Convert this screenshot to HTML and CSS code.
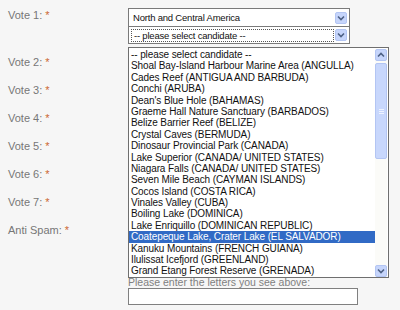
FILE: index.html
```html
<!DOCTYPE html>
<html lang="en">
<head>
  <meta charset="UTF-8">
  <title>Vote</title>
  <link rel="stylesheet" href="styles.css">
</head>
<body>

  <p class="intro">their. You must select 7 different nominees.</p>

  <form class="vote-form">
    <div class="row row-first">
      <label class="label">Vote 1: <span class="req">*</span></label>
      <div class="field">
        <div class="select">
          <span class="select-text">North and Central America</span>
          <span class="arrow"><svg width="8" height="6" viewBox="0 0 8 6"><polyline points="1,1.5 4,4.5 7,1.5" fill="none" stroke="#4d6185" stroke-width="1.6"/></svg></span>
        </div>
        <div class="select select-open">
          <span class="select-text focus">-- please select candidate --</span>
          <span class="arrow"><svg width="8" height="6" viewBox="0 0 8 6"><polyline points="1,1.5 4,4.5 7,1.5" fill="none" stroke="#4d6185" stroke-width="1.6"/></svg></span>
        </div>

        <div class="dropdown">
          <ul class="options">
            <li>-- please select candidate --</li>
            <li>Shoal Bay-Island Harbour Marine Area (ANGULLA)</li>
            <li>Cades Reef (ANTIGUA AND BARBUDA)</li>
            <li>Conchi (ARUBA)</li>
            <li>Dean's Blue Hole (BAHAMAS)</li>
            <li>Graeme Hall Nature Sanctuary (BARBADOS)</li>
            <li>Belize Barrier Reef (BELIZE)</li>
            <li>Crystal Caves (BERMUDA)</li>
            <li>Dinosaur Provincial Park (CANADA)</li>
            <li>Lake Superior (CANADA/ UNITED STATES)</li>
            <li>Niagara Falls (CANADA/ UNITED STATES)</li>
            <li>Seven Mile Beach (CAYMAN ISLANDS)</li>
            <li>Cocos Island (COSTA RICA)</li>
            <li>Vinales Valley (CUBA)</li>
            <li>Boiling Lake (DOMINICA)</li>
            <li>Lake Enriquillo (DOMINICAN REPUBLIC)</li>
            <li class="selected">Coatepeque Lake, Crater Lake (EL SALVADOR)</li>
            <li>Kanuku Mountains (FRENCH GUIANA)</li>
            <li>Ilulissat Icefjord (GREENLAND)</li>
            <li>Grand Etang Forest Reserve (GRENADA)</li>
          </ul>
          <div class="scrollbar">
            <span class="sb-btn"><svg width="8" height="6" viewBox="0 0 8 6"><polyline points="1,4.5 4,1.5 7,4.5" fill="none" stroke="#4d6185" stroke-width="1.6"/></svg></span>
            <span class="sb-track">
              <span class="sb-thumb"><span class="grip"></span></span>
            </span>
            <span class="sb-btn"><svg width="8" height="6" viewBox="0 0 8 6"><polyline points="1,1.5 4,4.5 7,1.5" fill="none" stroke="#4d6185" stroke-width="1.6"/></svg></span>
          </div>
        </div>
      </div>
    </div>

    <div class="row">
      <label class="label">Vote 2: <span class="req">*</span></label>
      <div class="field"><div class="select"></div></div>
    </div>
    <div class="row">
      <label class="label">Vote 3: <span class="req">*</span></label>
      <div class="field"><div class="select"></div></div>
    </div>
    <div class="row">
      <label class="label">Vote 4: <span class="req">*</span></label>
      <div class="field"><div class="select"></div></div>
    </div>
    <div class="row">
      <label class="label">Vote 5: <span class="req">*</span></label>
      <div class="field"><div class="select"></div></div>
    </div>
    <div class="row">
      <label class="label">Vote 6: <span class="req">*</span></label>
      <div class="field"><div class="select"></div></div>
    </div>
    <div class="row">
      <label class="label">Vote 7: <span class="req">*</span></label>
      <div class="field"><div class="select"></div></div>
    </div>

    <div class="row row-spam">
      <label class="label">Anti Spam: <span class="req">*</span></label>
      <div class="field">
        <div class="captcha"></div>
        <div class="hint">Please enter the letters you see above:</div>
        <input type="text" class="captcha-input">
      </div>
    </div>
  </form>

</body>
</html>
```

FILE: styles.css
```css
* {
  box-sizing: border-box;
}

body {
  margin: 0;
  background: #f6f6f6;
  font-family: "Liberation Sans", Arial, sans-serif;
  font-size: 11px;
  color: #707070;
  overflow: hidden;
}

.intro {
  margin: -11px 0 0 8px;
  height: 14px;
  line-height: 14px;
  color: #808080;
}

.vote-form {
  padding: 5px 0 0 8px;
}

.row {
  display: flex;
  height: 28px;
}

.row-first {
  position: relative;
  z-index: 10;
  height: 47px;
}

.label {
  width: 120px;
  line-height: 14px;
  color: #777;
}

.req {
  color: #cc6633;
}

.field {
  position: relative;
  width: 230px;
}

/* closed select boxes */
.select {
  display: flex;
  align-items: center;
  justify-content: space-between;
  width: 222px;
  height: 19px;
  padding: 0 2px 0 4px;
  background: #fff;
  border: 1px solid #7a7a7a;
  font-size: 9.5px;
  letter-spacing: -0.2px;
  color: #111;
}

.select-open {
  height: 17px;
  border-top: none;
  padding-left: 2px;
}

.select-text.focus {
  flex: 1;
  height: 13px;
  line-height: 11px;
  margin-right: 1px;
  padding-left: 2px;
  border: 1px dotted #555;
}

.arrow, .sb-btn {
  display: flex;
  align-items: center;
  justify-content: center;
  width: 12px;
  height: 12px;
  background: #c6d5fb;
  border: 1px solid #b3c5f3;
  border-radius: 2px;
}

/* open candidate list */
.dropdown {
  position: absolute;
  z-index: 20;
  top: 39px;
  left: 0;
  width: 261px;
  height: 231px;
  display: flex;
  background: #fff;
  border: 1px solid #6f6f6f;
  padding-top: 1px;
}

.options {
  flex: 1;
  margin: 0;
  padding: 0;
  list-style: none;
  font-size: 10px;
  letter-spacing: -0.1px;
  color: #111;
}

.options li {
  height: 11.4px;
  line-height: 11.4px;
  padding-left: 2px;
  white-space: nowrap;
}

.options li.selected {
  background: #316ac5;
  color: #fff;
}

.scrollbar {
  display: flex;
  flex-direction: column;
  width: 12px;
  margin-right: 1px;
  background: #fbfbf8;
}

.sb-track {
  flex: 1;
  padding: 2px 0;
}

.sb-thumb {
  display: flex;
  align-items: center;
  justify-content: center;
  height: 96px;
  background: #c8d7fc;
  border: 1px solid #b3c5f3;
  border-radius: 2px;
}

.grip {
  width: 5px;
  height: 5px;
  border-top: 1px solid #eef3ff;
  border-bottom: 1px solid #eef3ff;
  background: linear-gradient(#eef3ff, #eef3ff) center / 5px 1px no-repeat;
}

/* anti spam */
.row-spam {
  height: auto;
}

.captcha {
  height: 54px;
}

.hint {
  height: 11px;
  line-height: 10px;
  font-size: 10.5px;
  color: #808080;
}

.captcha-input {
  display: block;
  width: 230px;
  height: 17px;
  margin: 0;
  border: 1px solid #808080;
  background: #fff;
}
```
